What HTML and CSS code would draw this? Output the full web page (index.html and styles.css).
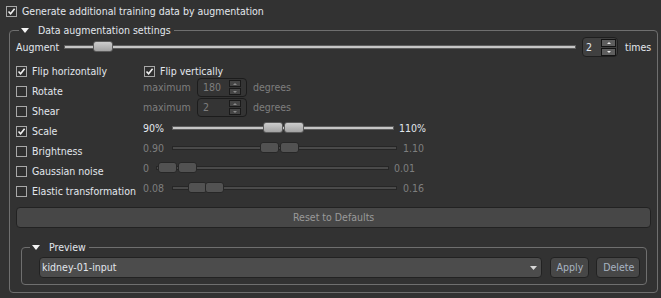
FILE: index.html
```html
<!DOCTYPE html>
<html>
<head>
<meta charset="utf-8">
<link rel="stylesheet" href="styles.css">
</head>
<body>
<div class="top-row">
  <span class="cb on"><svg viewBox="0 0 9 9"><path d="M1.5 4.5 L3.6 6.8 L7.6 1.8"/></svg></span>
  <span class="lbl">Generate additional training data by augmentation</span>
</div>
<fieldset class="group">
  <legend class="legend"><svg class="tri" viewBox="0 0 8 5"><polygon points="0,0 8,0 4,5"/></svg><span>Data augmentation settings</span></legend>
  <div class="aug-row">
    <span class="aug-label">Augment</span>
    <div class="groove en aug-groove"><span class="handle en" style="left:28px"></span></div>
    <div class="spin en">
      <span class="spin-val">2</span>
      <span class="spin-btns"><span class="sb up"></span><span class="sb down"></span></span>
    </div>
    <span class="times">times</span>
  </div>
  <div class="cols">
    <div class="col-left">
      <div class="crow"><span class="cb on"><svg viewBox="0 0 9 9"><path d="M1.5 4.5 L3.6 6.8 L7.6 1.8"/></svg></span><span class="lbl">Flip horizontally</span></div>
      <div class="crow"><span class="cb"></span><span class="lbl">Rotate</span></div>
      <div class="crow"><span class="cb"></span><span class="lbl">Shear</span></div>
      <div class="crow"><span class="cb on"><svg viewBox="0 0 9 9"><path d="M1.5 4.5 L3.6 6.8 L7.6 1.8"/></svg></span><span class="lbl">Scale</span></div>
      <div class="crow"><span class="cb"></span><span class="lbl">Brightness</span></div>
      <div class="crow"><span class="cb"></span><span class="lbl">Gaussian noise</span></div>
      <div class="crow"><span class="cb"></span><span class="lbl">Elastic transformation</span></div>
    </div>
    <div class="col-right">
      <div class="r-flipv"><span class="cb on"><svg viewBox="0 0 9 9"><path d="M1.5 4.5 L3.6 6.8 L7.6 1.8"/></svg></span><span class="lbl">Flip vertically</span></div>
      <div class="r-spin r-spin1">
        <span class="dis max-lbl">maximum</span>
        <div class="spin dis-spin"><span class="spin-val">180</span><span class="spin-btns"><span class="sb up"></span><span class="sb down"></span></span></div>
        <span class="dis">degrees</span>
      </div>
      <div class="r-spin r-spin2">
        <span class="dis max-lbl">maximum</span>
        <div class="spin dis-spin"><span class="spin-val">2</span><span class="spin-btns"><span class="sb up"></span><span class="sb down"></span></span></div>
        <span class="dis">degrees</span>
      </div>
      <div class="r-slider">
        <span class="s-min w29">90%</span>
        <div class="groove en g221"><span class="handle en" style="left:90px"></span><span class="handle en" style="left:111px"></span></div>
        <span class="s-max">110%</span>
      </div>
      <div class="r-slider">
        <span class="s-min dis w29">0.90</span>
        <div class="groove g224"><span class="handle" style="left:87px"></span><span class="handle" style="left:107px"></span></div>
        <span class="s-max dis m7">1.10</span>
      </div>
      <div class="r-slider">
        <span class="s-min dis w13">0</span>
        <div class="groove g232"><span class="handle" style="left:1px"></span><span class="handle" style="left:21px"></span></div>
        <span class="s-max dis">0.01</span>
      </div>
      <div class="r-slider">
        <span class="s-min dis w29">0.08</span>
        <div class="groove g224"><span class="handle" style="left:15px"></span><span class="handle" style="left:32px"></span></div>
        <span class="s-max dis m7">0.16</span>
      </div>
    </div>
  </div>
  <div class="reset">Reset to Defaults</div>
  <fieldset class="preview">
    <legend class="legend pv-legend"><svg class="tri" viewBox="0 0 8 5"><polygon points="0,0 8,0 4,5"/></svg><span>Preview</span></legend>
    <div class="pv-row">
      <div class="combo"><span>kidney-01-input</span><svg class="combo-arrow" viewBox="0 0 7 4"><polygon points="0,0 7,0 3.5,4"/></svg></div>
      <div class="btn">Apply</div>
      <div class="btn">Delete</div>
    </div>
  </fieldset>
</fieldset>
</body>
</html>
```
FILE: styles.css
```css
html, body {
  margin: 0;
  padding: 0;
  background: #323232;
}
body {
  font-family: "DejaVu Sans Condensed", "DejaVu Sans", sans-serif;
  font-stretch: condensed;
  font-size: 10.5px;
  line-height: 13px;
  color: #e2e7ed;
  width: 661px;
  height: 298px;
  overflow: hidden;
}
.top-row {
  height: 22px;
  display: flex;
  align-items: center;
  padding-left: 6px;
}
.cb {
  box-sizing: border-box;
  width: 11px;
  height: 11px;
  border: 1px solid #a8a8a8;
  background: #2f2f2f;
  display: inline-flex;
  align-items: center;
  justify-content: center;
  flex: none;
}
.cb svg {
  width: 9px;
  height: 9px;
}
.cb svg path {
  fill: none;
  stroke: #f0f0f0;
  stroke-width: 1.6;
}
.lbl {
  margin-left: 5px;
  white-space: nowrap;
}
.group {
  margin: 2px 5px 0 9px;
  padding: 1px 6px 7px 6px;
  border: 1px solid #6f6f6f;
  border-radius: 4px;
}
.legend {
  margin-left: 3px;
  padding: 0 3px 0 2px;
  line-height: 12px;
  display: flex;
  align-items: center;
  white-space: nowrap;
}
.tri {
  width: 8px;
  height: 5px;
  margin-right: 9px;
  fill: #f4f4f4;
}
.aug-row {
  height: 20px;
  display: flex;
  align-items: center;
}
.aug-label {
  width: 48px;
  flex: none;
}
.groove {
  box-sizing: border-box;
  height: 4px;
  background: #4a4a4a;
  border: 1px solid #262626;
  position: relative;
  flex: none;
}
.groove.en {
  background: #c6c6c6;
  border-color: #5c5c5c;
}
.aug-groove {
  width: 512px;
}
.handle {
  position: absolute;
  top: -5px;
  width: 19px;
  height: 11px;
  box-sizing: border-box;
  border-radius: 3px;
  background: #525252;
  border: 1px solid #272727;
}
.handle.en {
  width: 20px;
  background: linear-gradient(#cdcdcd, #a2a2a2);
  border-color: #5a5a5a;
}
.spin {
  box-sizing: border-box;
  display: flex;
  align-items: center;
  justify-content: space-between;
  border: 1px solid #1f1f1f;
  border-radius: 4px;
  background: #404040;
  flex: none;
}
.spin.en {
  width: 36px;
  height: 20px;
  margin-left: 6px;
  padding: 0 1px 0 3px;
}
.spin-val {
  line-height: 13px;
}
.spin-btns {
  display: flex;
  flex-direction: column;
  gap: 1px;
}
.sb {
  box-sizing: border-box;
  width: 15px;
  height: 8px;
  background: #5e5e5e;
  border: 1px solid #141414;
  display: flex;
  align-items: center;
  justify-content: center;
}
.sb::after {
  content: "";
  width: 0;
  height: 0;
  border-left: 2px solid transparent;
  border-right: 2px solid transparent;
}
.sb.up::after {
  border-bottom: 2px solid #e8e8e8;
}
.sb.down::after {
  border-top: 2px solid #e8e8e8;
}
.times {
  margin-left: 7px;
}
.cols {
  display: flex;
  margin-top: 4px;
}
.col-left {
  width: 127px;
  flex: none;
}
.crow {
  height: 20px;
  display: flex;
  align-items: center;
}
.col-right {
  flex: 1;
}
.r-flipv {
  box-sizing: border-box;
  height: 17px;
  padding-top: 4px;
  padding-left: 1px;
  display: flex;
  align-items: center;
}
.r-spin {
  display: flex;
  align-items: center;
}
.r-spin1 { height: 19px; }
.r-spin2 { height: 21px; }
.dis {
  color: #7e7e7e;
}
.max-lbl {
  width: 54px;
}
.dis-spin {
  width: 50px;
  height: 19px;
  background: #343434;
  border-color: #1c1c1c;
  padding: 0 5px 0 5px;
  color: #7e7e7e;
}
.dis-spin .sb {
  width: 12px;
  height: 7px;
  background: #454545;
  border-color: #1a1a1a;
}
.dis-spin .sb.up::after { border-bottom-color: #8a8a8a; }
.dis-spin .sb.down::after { border-top-color: #8a8a8a; }
.dis-spin + .dis {
  margin-left: 6px;
}
.r-slider {
  height: 20px;
  display: flex;
  align-items: center;
}
.s-min { flex: none; }
.w29 { width: 29px; }
.w13 { width: 13px; }
.g221 { width: 222px; }
.g224 { width: 225px; }
.g232 { width: 233px; }
.s-max { margin-left: 5px; }
.s-max.m7 { margin-left: 6px; }
.reset {
  box-sizing: border-box;
  margin-top: 6px;
  height: 21px;
  border: 1px solid #222;
  border-radius: 4px;
  background: #474747;
  color: #9a9a9a;
  display: flex;
  align-items: center;
  justify-content: center;
}
.preview {
  margin: 13px 4px 0 5px;
  padding: 4px 6px 6px 17px;
  border: 1px solid #6f6f6f;
  border-radius: 4px;
}
.pv-legend {
  margin-left: -9px;
}
.tri + span {
  line-height: 12px;
}
.pv-row {
  display: flex;
  align-items: center;
  gap: 7px;
}
.combo {
  box-sizing: border-box;
  flex: 1;
  height: 21px;
  margin-right: 1px;
  border: 1px solid #222;
  border-radius: 4px;
  background: #4c4c4c;
  display: flex;
  align-items: center;
  justify-content: space-between;
  padding: 0 4px 0 2px;
}
.combo-arrow {
  width: 7px;
  height: 4px;
  fill: #d8d8d8;
}
.btn {
  box-sizing: border-box;
  height: 21px;
  padding: 0 5px 0 6px;
  border: 1px solid #222;
  border-radius: 4px;
  background: #474747;
  color: #a8b4c2;
  display: flex;
  align-items: center;
}
```
